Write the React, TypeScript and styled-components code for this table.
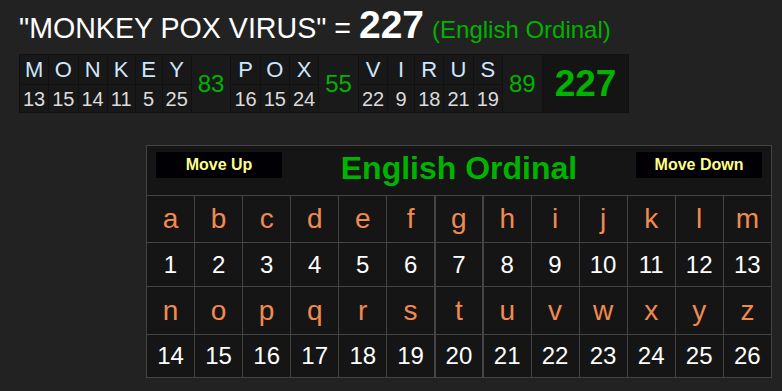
import React from "react";
import styled, { createGlobalStyle } from "styled-components";

const Global = createGlobalStyle`
  html, body { margin: 0; padding: 0; background: #222222; }
  body { font-family: "Liberation Sans", Arial, sans-serif; }
`;

const Page = styled.div`
  width: 782px;
  height: 391px;
  box-sizing: border-box;
  padding: 0 0 0 19px;
  overflow: hidden;
`;

const Title = styled.div`
  height: 54px;
  display: flex;
  align-items: baseline;
  white-space: pre;
  line-height: 1;
  padding-top: 5px;
  box-sizing: border-box;
`;

const Phrase = styled.span`
  color: #ffffff;
  font-size: 28.6px;
`;

const Total = styled.span`
  color: #ffffff;
  font-size: 39px;
  font-weight: bold;
`;

const Cipher = styled.span`
  color: #00b300;
  font-size: 24px;
  margin-left: 8px;
`;

const Strip = styled.table`
  border-collapse: collapse;
  background: #181818;
`;

const SCell = styled.td<{ $kind: "letter" | "num" }>`
  border: 1px solid #111111;
  padding: 0 3px;
  min-width: 20px;
  text-align: center;
  height: ${(p) => (p.$kind === "letter" ? "29px" : "27px")};
  font-size: ${(p) => (p.$kind === "letter" ? "22px" : "20px")};
  color: ${(p) => (p.$kind === "letter" ? "#cfe6ff" : "#dcdcdc")};
  line-height: 1;
`;

const SumCell = styled.td<{ $big?: boolean }>`
  border: 1px solid #111111;
  background: ${(p) => (p.$big ? "#141414" : "#1a1a1a")};
  color: #00b300;
  text-align: center;
  font-size: ${(p) => (p.$big ? "37px" : "24px")};
  font-weight: ${(p) => (p.$big ? "bold" : "normal")};
  padding: ${(p) => (p.$big ? "0 12px" : "0 6px")};
  line-height: 1;
`;

const Chart = styled.table`
  margin: 32px 0 0 127px;
  border-collapse: collapse;
  table-layout: fixed;
  width: 626px;
  background: #151515;
`;

const HeadCell = styled.td`
  border: 1px solid #444444;
  height: 49px;
  padding: 0;
  vertical-align: top;
`;

const HeadBar = styled.div`
  display: flex;
  align-items: flex-start;
  justify-content: space-between;
  padding: 6px 9px 0 9px;
`;

const MoveButton = styled.button`
  width: 126px;
  height: 26px;
  background: #000005;
  border: none;
  color: #ffff88;
  font-family: "Liberation Sans", Arial, sans-serif;
  font-weight: bold;
  font-size: 16px;
  padding: 0;
  cursor: pointer;
`;

const ChartTitle = styled.div`
  color: #00b300;
  font-size: 32px;
  font-weight: bold;
  line-height: 1;
  padding-top: 0px;
`;

const GCell = styled.td<{ $kind: "letter" | "num"; $mid?: boolean; $h: number }>`
  border: 1px solid #444444;
  border-left-width: ${(p) => (p.$mid ? "2px" : "1px")};
  border-right-width: ${(p) => (p.$mid ? "2px" : "1px")};
  height: ${(p) => p.$h}px;
  padding: 0;
  text-align: center;
  line-height: 1;
  color: ${(p) => (p.$kind === "letter" ? "#f08a50" : "#ffffff")};
  font-size: ${(p) => (p.$kind === "letter" ? "28px" : "24px")};
`;

const words: { letters: string; sum: number }[] = [
  { letters: "MONKEY", sum: 83 },
  { letters: "POX", sum: 55 },
  { letters: "VIRUS", sum: 89 },
];

const val = (c: string) => c.toLowerCase().charCodeAt(0) - 96;

const alpha1 = "abcdefghijklm".split("");
const alpha2 = "nopqrstuvwxyz".split("");

export default function App() {
  return (
    <>
      <Global />
      <Page>
        <Title>
          <Phrase>{'"MONKEY POX VIRUS" = '}</Phrase>
          <Total>227</Total>
          <Cipher>(English Ordinal)</Cipher>
        </Title>
        <Strip>
          <tbody>
            <tr>
              {words.map((w) => (
                <React.Fragment key={w.letters}>
                  {w.letters.split("").map((c, i) => (
                    <SCell key={i} $kind="letter">
                      {c}
                    </SCell>
                  ))}
                  <SumCell rowSpan={2}>{w.sum}</SumCell>
                </React.Fragment>
              ))}
              <SumCell rowSpan={2} $big>
                227
              </SumCell>
            </tr>
            <tr>
              {words.map((w) =>
                w.letters.split("").map((c, i) => (
                  <SCell key={w.letters + i} $kind="num">
                    {val(c)}
                  </SCell>
                ))
              )}
            </tr>
          </tbody>
        </Strip>
        <Chart>
          <tbody>
            <tr>
              <HeadCell colSpan={13}>
                <HeadBar>
                  <MoveButton>Move Up</MoveButton>
                  <ChartTitle>English Ordinal</ChartTitle>
                  <MoveButton>Move Down</MoveButton>
                </HeadBar>
              </HeadCell>
            </tr>
            {[alpha1, alpha2].map((row, r) => (
              <React.Fragment key={r}>
                <tr>
                  {row.map((c, i) => (
                    <GCell key={c} $kind="letter" $mid={i === 6} $h={r === 0 ? 46 : 47}>
                      {c}
                    </GCell>
                  ))}
                </tr>
                <tr>
                  {row.map((c, i) => (
                    <GCell key={c} $kind="num" $mid={i === 6} $h={r === 0 ? 43 : 42}>
                      {val(c)}
                    </GCell>
                  ))}
                </tr>
              </React.Fragment>
            ))}
          </tbody>
        </Chart>
      </Page>
    </>
  );
}
